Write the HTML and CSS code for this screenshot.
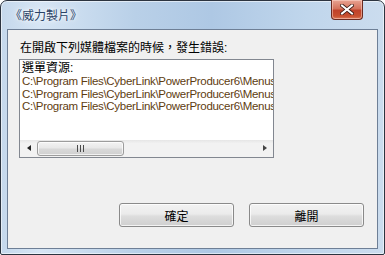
FILE: index.html
```html
<!DOCTYPE html>
<html>
<head>
<meta charset="utf-8">
<link rel="stylesheet" href="styles.css">
</head>
<body>
<div class="window">
  <div class="titlebar">
    <span class="title">《威力製片》</span>
    <div class="close">
      <svg width="14" height="11" viewBox="0 0 14 11"><path d="M2 1.5 L12 9.5 M12 1.5 L2 9.5" stroke="#3a1a14" stroke-width="3.6" stroke-linecap="square"/><path d="M2 1.5 L12 9.5 M12 1.5 L2 9.5" stroke="#fff" stroke-width="2" stroke-linecap="square"/></svg>
    </div>
  </div>
  <div class="client">
    <div class="label">在開啟下列媒體檔案的時候，發生錯誤:</div>
    <div class="listbox">
      <div class="lines">
        <div class="line head">選單資源:</div>
        <div class="line path">C:\Program Files\CyberLink\PowerProducer6\Menus\</div>
        <div class="line path">C:\Program Files\CyberLink\PowerProducer6\Menus\</div>
        <div class="line path">C:\Program Files\CyberLink\PowerProducer6\Menus\</div>
      </div>
      <div class="hscroll">
        <div class="arrow left"></div>
        <div class="track">
          <div class="thumb"><span class="grip"></span></div>
        </div>
        <div class="arrow right"></div>
      </div>
    </div>
    <div class="buttons">
      <div class="btn">確定</div>
      <div class="btn">離開</div>
    </div>
  </div>
</div>
</body>
</html>
```

FILE: styles.css
```css
html, body {
  margin: 0;
  padding: 0;
  background: #fff;
}
body {
  width: 385px;
  height: 255px;
  overflow: hidden;
  font-family: "Liberation Sans", "Noto Sans CJK TC", sans-serif;
  font-size: 12px;
}
.window {
  box-sizing: border-box;
  width: 385px;
  height: 255px;
  border: 1px solid #2c3440;
  border-radius: 7px 7px 2px 2px;
  background: linear-gradient(90deg, #c5d8ec 0%, #d6e5f4 10%, #b9d0e8 35%, #aec8e4 55%, #c0d6ec 80%, #cbdcee 100%);
  display: flex;
  flex-direction: column;
  padding: 0 6px 5px 6px;
  box-shadow: inset 0 0 0 1px rgba(255,255,255,0.55);
}
.titlebar {
  height: 28px;
  display: flex;
  align-items: flex-start;
  justify-content: space-between;
}
.title {
  margin-top: 8px;
  margin-left: 3px;
  color: #2a4266;
  font-size: 12px;
  line-height: 14px;
  text-shadow: 0 0 6px #fff, 0 0 3px #fff;
}
.close {
  box-sizing: border-box;
  width: 32px;
  height: 20px;
  margin-top: -1px;
  margin-right: 15px;
  border: 1px solid #6b2a20;
  border-top: none;
  border-radius: 0 0 4px 4px;
  background: linear-gradient(180deg, #e8a493 0%, #d5735c 45%, #c0422a 55%, #c8502f 85%, #dc7a5a 100%);
  box-shadow: inset 0 0 0 1px rgba(255,220,210,0.5);
  display: flex;
  align-items: center;
  justify-content: center;
}
.client {
  flex: 1;
  border: 1px solid #6e7f96;
  background: #f0f0f0;
  display: flex;
  flex-direction: column;
  padding: 11px 0 0 11px;
}
.label {
  line-height: 14px;
  color: #000;
  margin-left: 1px;
}
.listbox {
  box-sizing: border-box;
  width: 255px;
  height: 99px;
  margin-top: 4px;
  border: 1px solid #828790;
  background: #fff;
  display: flex;
  flex-direction: column;
  overflow: hidden;
}
.lines {
  flex: 1;
  padding: 1px 0 0 2px;
  white-space: nowrap;
  overflow: hidden;
}
.line {
  line-height: 12.5px;
  height: 12.5px;
}
.head {
  color: #000;
  font-size: 12px;
  height: 14px;
  line-height: 14px;
}
.path {
  color: #5e3c10;
  font-size: 11.5px;
  letter-spacing: -0.3px;
}
.hscroll {
  height: 17px;
  display: flex;
  align-items: center;
  background: linear-gradient(180deg, #e6e6e6 0%, #f2f2f2 20%, #f2f2f2 100%);
}
.arrow {
  width: 17px;
  height: 17px;
  position: relative;
}
.arrow.left::after {
  content: "";
  position: absolute;
  left: 7px;
  top: 5px;
  border-style: solid;
  border-width: 3.5px 4px 3.5px 0;
  border-color: transparent #222 transparent transparent;
}
.arrow.right::after {
  content: "";
  position: absolute;
  left: 7px;
  top: 5px;
  border-style: solid;
  border-width: 3.5px 0 3.5px 4px;
  border-color: transparent transparent transparent #444;
}
.track {
  flex: 1;
  height: 17px;
  display: flex;
  align-items: center;
}
.thumb {
  box-sizing: border-box;
  width: 87px;
  height: 15px;
  border: 1px solid #9c9c9c;
  border-radius: 3px;
  background: linear-gradient(180deg, #f3f3f3 0%, #e8e8e8 45%, #d8d8d8 55%, #d0d0d0 100%);
  box-shadow: inset 0 0 0 1px rgba(255,255,255,0.7);
  display: flex;
  align-items: center;
  justify-content: center;
}
.grip {
  width: 7px;
  height: 7px;
  background: repeating-linear-gradient(90deg, #4a4a4a 0 1px, transparent 1px 3px);
}
.buttons {
  display: flex;
  gap: 15px;
  margin-top: 45px;
  margin-left: 100px;
}
.btn {
  box-sizing: border-box;
  width: 115px;
  height: 24px;
  border: 1px solid #8a8a8a;
  border-radius: 3px;
  background: linear-gradient(180deg, #f2f2f2 0%, #ebebeb 45%, #dddddd 55%, #cfcfcf 100%);
  box-shadow: inset 0 0 0 1px rgba(255,255,255,0.75);
  display: flex;
  align-items: center;
  justify-content: center;
  color: #000;
  font-size: 12px;
}
```
